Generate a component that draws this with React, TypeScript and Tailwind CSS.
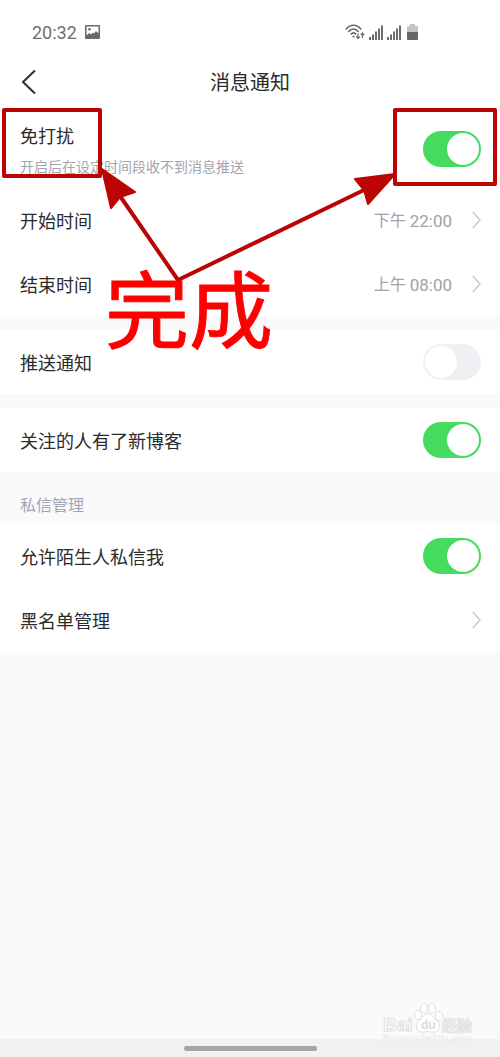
import React, { useState } from 'react';

interface SwitchRowProps {
  id: string;
  label: string;
  hint?: string;
  initial: boolean;
}

interface LinkRowProps {
  label: string;
  period?: string;
  time?: string;
}

const SwitchRow: React.FC<SwitchRowProps> = ({ id, label, hint, initial }) => {
  const [on, setOn] = useState(initial);

  return (
    <label htmlFor={id} className={`flex items-center justify-between pl-5 pr-[19px] ${hint ? 'h-[78px]' : 'h-16'}`}>
      <span className="flex flex-col pt-1">
        <span className="text-[18px] leading-7 text-[#2b2b2b]">{label}</span>
        {hint && <span className="pt-1 text-[14px] leading-6 text-[#a3a4ad]">{hint}</span>}
      </span>
      <span className="relative flex shrink-0">
        <input
          id={id}
          type="checkbox"
          role="switch"
          checked={on}
          onChange={(e) => setOn(e.target.checked)}
          className="peer h-9 w-[58px] appearance-none rounded-full bg-[#efeff4] checked:bg-[#44db5e]"
        />
        <span className="pointer-events-none absolute left-0.5 top-0.5 size-8 rounded-full bg-white peer-checked:left-6" />
      </span>
    </label>
  );
};

const LinkRow: React.FC<LinkRowProps> = ({ label, period, time }) => (
  <button type="button" className="flex h-16 w-full items-center pl-5 pr-[19px] text-left">
    <span className="flex-1 pt-1 text-[18px] leading-7 text-[#2b2b2b]">{label}</span>
    {time && (
      <span className="mr-5 flex items-center gap-1 pt-0.5 text-[#a0a1aa]">
        <span className="text-[16px] leading-6">{period}</span>
        <span className="text-[17px] leading-6">{time}</span>
      </span>
    )}
    <svg width="9" height="18" viewBox="0 0 9 18" fill="none" stroke="#c9c9cd" strokeWidth="1.5" aria-hidden="true">
      <path d="M.8 1 8 9 .8 17" />
    </svg>
  </button>
);

const Signal: React.FC = () => (
  <svg width="14" height="15" viewBox="0 0 14 15" fill="#6b6b6b" aria-hidden="true">
    <path d="M0 12h2v3H0zM3 9.500h2V15H3zM6 6.500h2V15H6zM9 3.500h2V15H9zM12 .5h2V15h-2z" />
  </svg>
);

const StatusBar: React.FC = () => (
  <div className="flex h-[54px] items-center pt-2.5 pl-8 pr-[82px] text-[#6f6f6f]">
    <span className="pt-0.5 text-[18px] leading-6">20:32</span>
    <svg className="ml-2" width="15" height="14" viewBox="0 0 15 14" aria-hidden="true">
      <rect width="15" height="14" rx="1" fill="#696969" />
      <path d="M1.500 1.500h12v7l-2.500-2.500-2 2.500-1.200-1-1.600 2-2-1.500-2.700 2.500z" fill="#fff" />
      <circle cx="4.500" cy="4.300" r="1.300" fill="#696969" />
    </svg>
    <div className="ml-auto flex items-center gap-1">
      <svg width="20" height="16" viewBox="0 0 20 16" fill="none" stroke="#6b6b6b" strokeWidth="1.600" aria-hidden="true">
        <path d="M.8 5.500C5-.2 12-.2 16.200 5.500M3.300 8C6.500 4 10.500 4 13.700 8M5.800 10.400c1.800-2 3.600-2 5.400 0" />
        <circle cx="8.500" cy="12.500" r="1.100" fill="#6b6b6b" stroke="none" />
        <path d="M13 9.500v5M11.300 12.500l1.700 2 1.700-2M17.500 14V9M15.800 11l1.700-2 1.700 2" strokeWidth="1.200" />
      </svg>
      <Signal />
      <Signal />
      <svg className="ml-0.5" width="11" height="16" viewBox="0 0 11 16" aria-hidden="true">
        <path d="M3 0h5v2h2q1 0 1 1v5H0V3q0-1 1-1h2z" fill="#c4c4c4" />
        <path d="M0 8h11v7q0 1-1 1H1q-1 0-1-1z" fill="#666" />
      </svg>
    </div>
  </div>
);

// Hand-drawn marks that lie over the settings list
const Annotations: React.FC = () => (
  <div className="pointer-events-none absolute left-0 top-0">
    <svg width="500" height="300" viewBox="0 0 500 300" fill="none" stroke="#bb0505" strokeLinejoin="round" aria-hidden="true">
      <rect x="4" y="110" width="96" height="66" strokeWidth="4" />
      <rect x="395" y="110" width="100" height="74" strokeWidth="4" />
      <path d="M120 196 178 280 364 190" strokeWidth="4" />
      <path d="M102 169 135 192 120 197 111 208z" fill="#bb0505" strokeWidth="2" />
      <path d="M395 174 355 179 364 190 368 204z" fill="#bb0505" strokeWidth="2" />
    </svg>
    <span className="absolute left-[105px] top-[266px] whitespace-nowrap text-[84px] leading-[96px] text-[#ff0000] [-webkit-text-stroke:1px_#ff0000]">
      完成
    </span>
  </div>
);

const Watermark: React.FC = () => (
  <svg
    className="absolute bottom-2 right-6"
    width="94"
    height="50"
    viewBox="0 0 94 50"
    fill="#fff"
    stroke="#e0e0e0"
    strokeWidth="1"
    fontFamily='"Liberation Sans", "Noto Sans CJK SC", sans-serif'
  >
    <text x="1" y="32" fontSize="19" fontWeight="bold">Bai</text>
    <ellipse cx="36" cy="16" rx="3.500" ry="4.500" />
    <ellipse cx="42" cy="9" rx="3.500" ry="5" />
    <ellipse cx="50" cy="9" rx="3.500" ry="5" />
    <ellipse cx="57" cy="17" rx="3.500" ry="4.500" />
    <path d="M46 15c4 0 5 3 8 6 5 4 5 11-1 12-3 .5-5-.5-7-.5s-4 1-7 .5c-6-1-6-8-1-12 3-3 4-6 8-6z" />
    <text x="39" y="30" fontSize="12" fontWeight="bold" fill="#dcdcdc" stroke="none">du</text>
    <text x="60" y="32" fontSize="15" fontWeight="bold">经验</text>
    <text x="1" y="44" fontSize="11" fill="#fafafa" stroke="#e6e6e6" paintOrder="stroke">jingyan.baidu.com</text>
  </svg>
);

const App: React.FC = () => {
  return (
    <div className="relative flex min-h-screen flex-col bg-[#fafafa] font-[Roboto,'Noto_Sans_CJK_SC',sans-serif]">
      <header className="bg-white">
        <StatusBar />
        <div className="grid h-14 grid-cols-3 items-center px-5">
          <button type="button" aria-label="返回" className="w-8">
            <svg width="17" height="26" viewBox="0 0 17 26" fill="none" stroke="#2f2f2f" strokeWidth="2" aria-hidden="true">
              <path d="M15 1.500 3 13 15 24.500" />
            </svg>
          </button>
          <h1 className="pt-0.5 text-center text-[20px] leading-7 text-[#2b2b2b]">消息通知</h1>
        </div>
      </header>

      <main className="flex-1">
        <section className="bg-white">
          <SwitchRow id="dnd" label="免打扰" hint="开启后在设定时间段收不到消息推送" initial={true} />
          <LinkRow label="开始时间" period="下午" time="22:00" />
          <LinkRow label="结束时间" period="上午" time="08:00" />
        </section>
        <section className="mt-3.5 bg-white">
          <SwitchRow id="push" label="推送通知" initial={false} />
        </section>
        <section className="mt-3.5 bg-white">
          <SwitchRow id="blog" label="关注的人有了新博客" initial={true} />
        </section>
        <h2 className="px-5 pb-1.5 pt-[22px] text-[16px] leading-6 text-[#a3a6b5]">私信管理</h2>
        <section className="bg-white">
          <SwitchRow id="stranger" label="允许陌生人私信我" initial={true} />
          <LinkRow label="黑名单管理" />
        </section>
      </main>

      <footer className="flex h-[18px] items-center justify-center bg-[#f1f1f1]">
        <div className="h-[5px] w-[133px] rounded-full bg-[#a6a6a6]" />
      </footer>

      <Watermark />
      <Annotations />
    </div>
  );
};

export default App;
